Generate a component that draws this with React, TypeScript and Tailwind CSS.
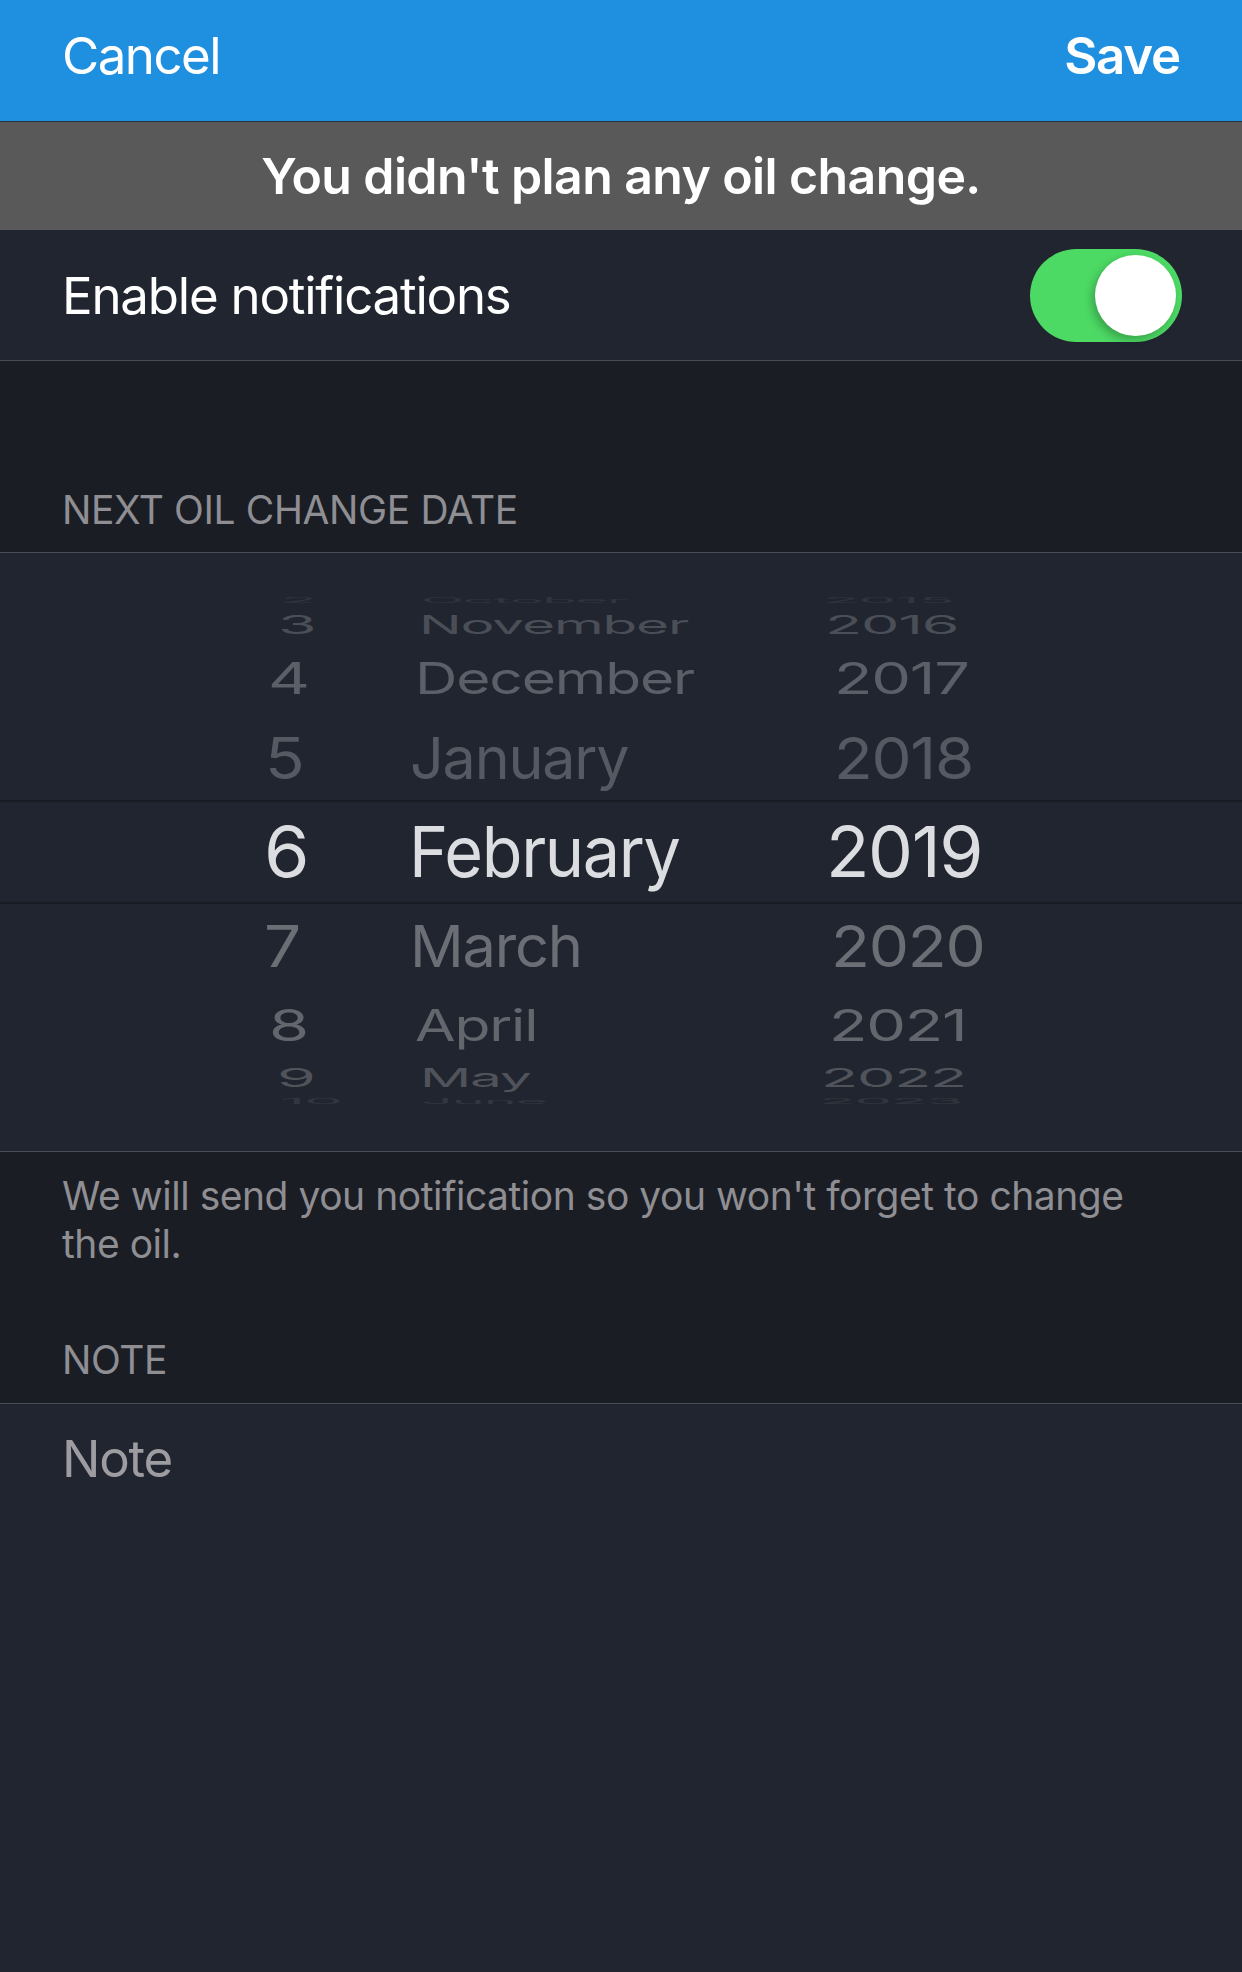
import React from "react";

interface WheelRow {
  day: string;
  month: string;
  year: string;
  h: number;
  xd: number;
  xm: number;
  xy: number;
  m: number;
  sy: number;
  color: string;
  selected?: boolean;
}

// x positions are page pixels, m = horizontal size of the row (perspective + loupe), sy = vertical squash
const wheel: WheelRow[] = [
  { day: "2", month: "October", year: "2015", h: 21, xd: 280, xm: 421, xy: 823, m: 0.84, sy: 0.1, color: "#30343c" },
  { day: "3", month: "November", year: "2016", h: 30, xd: 278, xm: 419, xy: 825, m: 0.853, sy: 0.36, color: "#4a4e56" },
  { day: "4", month: "December", year: "2017", h: 76, xd: 268, xm: 415, xy: 834, m: 0.884, sy: 0.63, color: "#5b5f67" },
  { day: "5", month: "January", year: "2018", h: 84, xd: 265, xm: 410, xy: 834, m: 0.89, sy: 0.83, color: "#555962" },
  { day: "6", month: "February", year: "2019", h: 104, xd: 264, xm: 409, xy: 826, m: 1, sy: 1, color: "#dcdde0", selected: true },
  { day: "7", month: "March", year: "2020", h: 84, xd: 264, xm: 410, xy: 831, m: 0.895, sy: 0.83, color: "#6b6e75" },
  { day: "8", month: "April", year: "2021", h: 74, xd: 269, xm: 415, xy: 829, m: 0.884, sy: 0.63, color: "#63666d" },
  { day: "9", month: "May", year: "2022", h: 32, xd: 277, xm: 420, xy: 821, m: 0.853, sy: 0.36, color: "#50535a" },
  { day: "10", month: "June", year: "2023", h: 14, xd: 280, xm: 421, xy: 819, m: 0.84, sy: 0.1, color: "#32363e" },
];

function Toggle() {
  return (
    <div className="flex h-[93px] w-[152px] items-center justify-end rounded-full bg-[#4cd964] pr-[6px]">
      <div className="h-[81px] w-[81px] rounded-full bg-white shadow-[-3px_4px_8px_rgba(0,0,0,0.25)]" />
    </div>
  );
}

function Cell({ text, sx, sy, width }: { text: string; sx: number; sy: number; width?: number }) {
  return (
    <span className="shrink-0" style={{ width }}>
      <span
        className="inline-block origin-left whitespace-nowrap"
        style={{ transform: `scale(${sx}, ${sy})` }}
      >
        {text}
      </span>
    </span>
  );
}

function DatePicker() {
  return (
    <div className="flex flex-col overflow-hidden bg-[#21252f] pt-[36px] pb-[43px]">
      {wheel.map((r) => (
        <div
          key={r.month}
          className={
            r.selected
              ? "flex items-center border-y-2 border-[#1a1c23]"
              : "flex items-center"
          }
          style={{ height: r.h }}
        >
          <div
            className="flex w-full items-center text-[70px] leading-none tracking-[-0.02em]"
            style={{ paddingLeft: r.xd, color: r.color }}
          >
            <Cell text={r.day} sx={r.m * 1.05} sy={r.sy} width={r.xm - r.xd} />
            <Cell text={r.month} sx={r.m * 0.95} sy={r.sy} width={r.xy - r.xm} />
            <Cell text={r.year} sx={r.m * 1.02} sy={r.sy} />
          </div>
        </div>
      ))}
    </div>
  );
}

export default function App() {
  return (
    <div className="flex min-h-[1972px] flex-col bg-[#21252f] font-['Inter',sans-serif] text-white">
      {/* nav bar */}
      <div className="flex h-[122px] items-start justify-between border-b border-[#2e3340] bg-[#1f90e0] px-[62px] pt-[30px]">
        <span className="text-[51px] leading-none tracking-[-0.03em]">Cancel</span>
        <span className="text-[51px] font-semibold leading-none tracking-[-0.024em]">Save</span>
      </div>

      {/* empty state banner */}
      <div className="flex h-[108px] items-center justify-center bg-[#595959]">
        <span className="text-[50px] font-semibold leading-none tracking-[-0.012em]">
          You didn't plan any oil change.
        </span>
      </div>

      {/* notifications switch */}
      <div className="flex h-[131px] items-center justify-between border-b border-[#4a4d54] bg-[#21252f] pl-[62px] pr-[60px]">
        <span className="text-[51px] leading-none tracking-[-0.024em]">Enable notifications</span>
        <Toggle />
      </div>

      {/* date section */}
      <div className="flex h-[192px] items-end border-b border-[#4a4d54] bg-[#1b1d25] px-[62px] pb-[23px]">
        <span className="text-[39px] leading-none tracking-[-0.01em] text-[#8e8e93]">
          NEXT OIL CHANGE DATE
        </span>
      </div>

      <div className="border-b border-[#4a4d54]">
        <DatePicker />
      </div>

      <div className="flex flex-col bg-[#1b1d25] px-[62px] pt-[20px] pb-[24px]">
        <p className="pr-[20px] text-[39px] leading-[48px] tracking-[-0.012em] text-[#8e8e93]">
          We will send you notification so you won't forget to change the oil.
        </p>
        <span className="mt-[72px] text-[39px] leading-none tracking-[-0.01em] text-[#8e8e93]">NOTE</span>
      </div>

      {/* note field */}
      <div className="flex-1 border-t border-[#4a4d54] bg-[#21252f] px-[62px] pt-[29px]">
        <span className="text-[51px] leading-none tracking-[-0.024em] text-[#9d9da1]">Note</span>
      </div>
    </div>
  );
}
